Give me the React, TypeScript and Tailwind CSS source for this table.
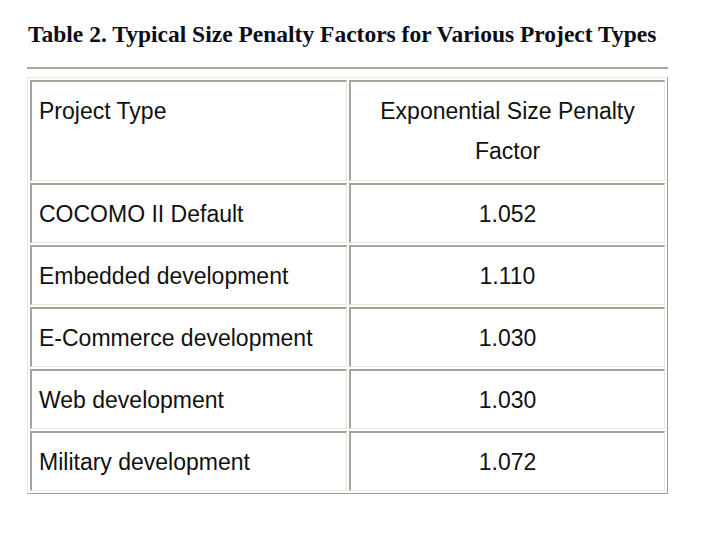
const rows: [string, string][] = [
  ["COCOMO II Default", "1.052"],
  ["Embedded development", "1.110"],
  ["E-Commerce development", "1.030"],
  ["Web development", "1.030"],
  ["Military development", "1.072"],
];

// inset-looking cell edges, like an old html table with border=1
const cell =
  "border-t-2 border-l-2 border-b border-r border-t-[#a6a59b] border-l-[#a6a59b] border-b-[#e9e7dd] border-r-[#e9e7dd] pt-[9px] leading-[40px]";

export default function App() {
  return (
    <main className="min-h-screen w-[720px] bg-white pl-[27px] pt-[20px] text-[#111]">
      <div className="w-[641px]">
        <h1 className="whitespace-nowrap pl-px font-['Liberation_Serif',serif] text-[23.5px] font-bold leading-[28px] text-[#0d0d18]">
          Table 2. Typical Size Penalty Factors for Various Project Types
        </h1>
        <div className="mt-[19px] h-[2px] bg-[#a8a79e]" />

        <table className="mt-[8px] w-[641px] table-fixed border-separate border-spacing-[2px] border border-t-[#ebe9df] border-l-[#ebe9df] border-b-[#a09f96] border-r-[#a09f96] font-['Liberation_Sans',Arial,sans-serif] text-[23px]">
          <colgroup>
            <col className="w-[317px]" />
            <col className="w-[316px]" />
          </colgroup>
          <thead>
            <tr>
              <th className={`${cell} pb-[9px] pl-[7px] text-left align-top font-normal`}>
                Project Type
              </th>
              <th className={`${cell} pb-[9px] px-[20px] text-center align-top font-normal`}>
                Exponential Size Penalty Factor
              </th>
            </tr>
          </thead>
          <tbody>
            {rows.map(([type, factor]) => (
              <tr key={type}>
                <td className={`${cell} pb-[8px] pl-[7px] text-left align-middle`}>{type}</td>
                <td className={`${cell} pb-[8px] text-center align-middle`}>{factor}</td>
              </tr>
            ))}
          </tbody>
        </table>
      </div>
    </main>
  );
}
